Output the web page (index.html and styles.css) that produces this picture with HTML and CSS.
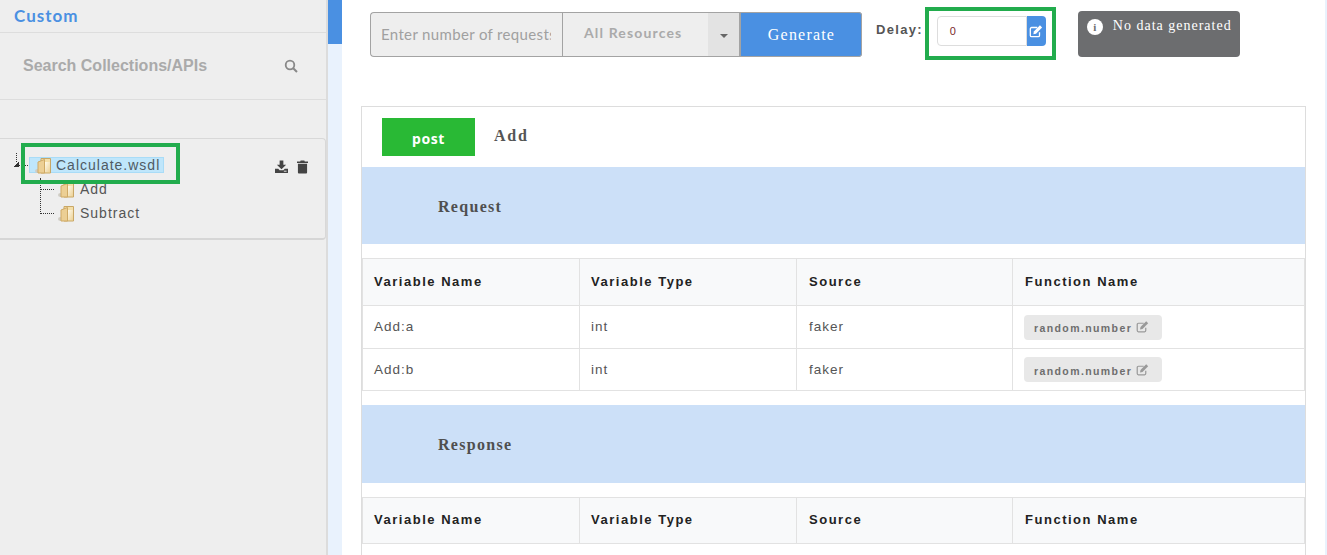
FILE: index.html
```html
<!DOCTYPE html>
<html lang="en">
<head>
<meta charset="utf-8">
<title>API data generator</title>
<link rel="stylesheet" href="styles.css">
</head>
<body>
<svg class="defs" width="0" height="0" aria-hidden="true">
  <defs>
    <linearGradient id="fold" x1="0" y1="0" x2="1" y2="1">
      <stop offset="0" stop-color="#fffaea"/><stop offset="1" stop-color="#ecd196"/>
    </linearGradient>
    <symbol id="folder" viewBox="0 0 17 17">
      <ellipse cx="2.500" cy="14" rx="2.500" ry="2" fill="#cfccc4"/>
      <path d="M6 1.500H15.500V16H6z" fill="#f4dfa8" stroke="#c9a765"/>
      <path d="M3 5 9.500 2.500V16H3z" fill="#eccf94" stroke="#cfa964"/>
      <path d="M10 5h5v10h-5z" fill="url(#fold)"/>
    </symbol>
    <symbol id="edit" viewBox="0 0 16 16">
      <path d="M12 9.500V13a1.500 1.500 0 0 1-1.500 1.500H3A1.500 1.500 0 0 1 1.500 13V5.500A1.500 1.500 0 0 1 3 4h6.500" fill="none" stroke="currentColor" stroke-width="1.500"/>
      <path d="M5.500 8.500 12.500 1.500l2.500 2.500-7 7-3 .6z" fill="currentColor"/>
    </symbol>
  </defs>
</svg>
<div class="app">
  <aside class="sidebar">
    <h2 class="brand">Custom</h2>
    <div class="search">
      <span>Search Collections/APIs</span>
      <svg class="search-icon" viewBox="0 0 14 14"><circle cx="6" cy="6" r="4.300" fill="none" stroke="currentColor" stroke-width="1.800"/><path d="M9.200 9.200 13 13" stroke="currentColor" stroke-width="2"/></svg>
    </div>
    <div class="tree-card">
      <div class="tree">
        <div class="tree-root">
          <span class="twist"></span>
          <span class="node-selected"><svg class="folder"><use href="#folder"/></svg>Calculate.wsdl</span>
        </div>
        <div class="tree-child"><span class="branch branch-first"></span><svg class="folder"><use href="#folder"/></svg>Add</div>
        <div class="tree-child"><span class="branch"></span><svg class="folder"><use href="#folder"/></svg>Subtract</div>
      </div>
      <div class="tree-actions">
        <svg class="tree-icon" viewBox="0 0 14 14"><path d="M5 0h4v4.500h3L7 9.500 2 4.500h3zM0 9h3.500L5 10.500h4L10.500 9H14v4.500H0z" fill="currentColor"/><rect x="9.500" y="11" width="3" height="1" fill="#eee"/></svg>
        <svg class="tree-icon tree-icon-trash" viewBox="0 0 12 14"><path d="M4 0h4l.5 1H12v1.500H0V1h3.500zM1 3.500h10V13a1 1 0 0 1-1 1H2a1 1 0 0 1-1-1z" fill="currentColor"/></svg>
      </div>
      <span class="highlight highlight-tree"></span>
    </div>
  </aside>
  <div class="rail"><div class="rail-tab"></div></div>
  <main class="main">
    <div class="toolbar">
      <div class="gen-group">
        <input class="count" type="text" placeholder="Enter number of requests" aria-label="Number of requests">
        <div class="resource"><span class="resource-label">All Resources</span><span class="caret-box"><span class="caret"></span></span></div>
        <button class="generate" type="button">Generate</button>
      </div>
      <label class="delay-label">Delay:</label>
      <div class="delay">
        <span class="delay-input">0</span>
        <span class="delay-btn"><svg class="edit-icon"><use href="#edit"/></svg></span>
        <span class="highlight highlight-delay"></span>
      </div>
      <div class="notice">
        <span class="info">i</span><span class="notice-text">No data generated</span>
      </div>
    </div>
    <section class="panel">
      <div class="op">
        <span class="method">post</span>
        <span class="op-name">Add</span>
      </div>
      <h3 class="band">Request</h3>
      <table class="vars">
        <thead><tr><th>Variable Name</th><th>Variable Type</th><th>Source</th><th>Function Name</th></tr></thead>
        <tbody>
          <tr><td>Add:a</td><td>int</td><td>faker</td><td><span class="fn">random.number<svg class="fn-icon"><use href="#edit"/></svg></span></td></tr>
          <tr><td>Add:b</td><td>int</td><td>faker</td><td><span class="fn">random.number<svg class="fn-icon"><use href="#edit"/></svg></span></td></tr>
        </tbody>
      </table>
      <h3 class="band band-response">Response</h3>
      <table class="vars vars-tail">
        <thead><tr><th>Variable Name</th><th>Variable Type</th><th>Source</th><th>Function Name</th></tr></thead>
      </table>
    </section>
  </main>
  <div class="rail rail-end"></div>
</div>
</body>
</html>
```
FILE: styles.css
```css
* { box-sizing: border-box; }
html, body { margin: 0; height: 100%; overflow: hidden; background: #fff; }
.defs { position: absolute; }
.app { display: flex; height: 555px; font-family: "Liberation Sans", Arial, sans-serif; color: #555; }

.sidebar { width: 328px; flex: none; background: #eee; border-right: 2px solid #dcdcdc; }
.brand { margin: 0; height: 33px; padding: 6px 0 0 14px; font: 700 17px/19px Lato, sans-serif; letter-spacing: 1px; color: #4a90e2; border-bottom: 1px solid #ddd; }
.search { height: 67px; padding: 0 28px 0 23px; display: flex; align-items: center; justify-content: space-between; border-bottom: 1px solid #ddd; font-weight: 700; font-size: 16px; color: #aaa; }
.search-icon { width: 14px; height: 14px; color: #888; }

.tree-card { position: relative; margin-top: 38px; height: 102px; width: 326px; padding: 14px 17px 0 12px; display: flex; justify-content: space-between; background: #eee; border: 1px solid #d8d8d8; border-left: 0; border-bottom: 2px solid #d6d6d6; border-radius: 0 4px 4px 0; }
.tree { font-size: 14px; letter-spacing: 1px; color: #555; line-height: 24px; }
.tree-root { display: flex; align-items: center; height: 24px; }
.twist { width: 17px; height: 24px; flex: none; background:
  linear-gradient(135deg, transparent 50%, #333 50%) 1px 9px / 6px 5px no-repeat,
  repeating-linear-gradient(90deg, #333 0 1px, transparent 1px 2px) 7px 12px / 10px 1px no-repeat,
  repeating-linear-gradient(#333 0 1px, transparent 1px 2px) 4px 0 / 1px 9px no-repeat; }
.node-selected { display: inline-flex; align-items: center; height: 16px; padding: 0 3px 0 5px; background: #bfe6fb; border: 1px solid #a9dcf7; color: #4f5a63; }
.folder { width: 17px; height: 17px; margin-right: 4px; flex: none; }
.tree-child { position: relative; display: flex; align-items: center; height: 24px; padding-left: 46px; }
.tree-child .folder { margin-right: 5px; }
.branch { position: absolute; left: 28px; top: -12px; width: 14px; height: 25px; border-left: 1px dotted #333; border-bottom: 1px dotted #333; }
.branch-first { top: 1px; height: 12px; }
.tree-actions { display: flex; gap: 9px; padding-top: 7px; color: #444; }
.tree-icon { width: 13px; height: 14px; }
.tree-icon-trash { width: 11px; }
.highlight { position: absolute; border: 4px solid #22ac4d; pointer-events: none; }
.highlight-tree { left: 21px; top: 4px; width: 159px; height: 41px; }
.highlight-delay { left: -12px; top: -9px; width: 131px; height: 53px; }

.rail { width: 14px; flex: none; background: #e9f2fd; }
.rail-tab { height: 44px; background: #4a90e2; }
.rail-end { width: 2px; }
.main { flex: 1; min-width: 0; background: #fff; padding: 0 19px; }

.toolbar { position: relative; display: flex; height: 106px; padding: 11px 0 0 9px; align-items: flex-start; }
.gen-group { display: flex; width: 492px; height: 46px; margin-top: 1px; flex: none; }
.count { width: 192px; height: 45px; padding: 0 11px 2px 10px; background: #eee; border: 1px solid #a3a3a3; border-right: 0; border-radius: 4px 0 0 4px; font: 400 15px Lato, sans-serif; letter-spacing: .35px; outline: none; }
.count::placeholder { color: #a0a0a0; opacity: 1; }
.resource { width: 179px; height: 45px; display: flex; border: 2px solid #a3a3a3; border-width: 1px 2px; border-left-width: 1px; background: #eee; color: #aaa; }
.resource-label { flex: 1; padding: 11px 0 0 21px; font: 700 14px/17px Lato, sans-serif; letter-spacing: 1.150px; }
.caret-box { width: 31px; display: flex; align-items: center; justify-content: center; background: #e3e3e3; }
.caret { width: 0; height: 0; margin-top: 2px; border: 4px solid transparent; border-top-color: #666; border-bottom: 0; }
.generate { width: 121px; height: 45px; padding: 0; border: 0; border-radius: 0 4px 4px 0; background: #4a90e2; color: #fff; font: 400 16px "Liberation Serif", serif; letter-spacing: 1.200px; box-shadow: inset 0 -1px 0 #a3a3a3, inset -1px 0 0 #a3a3a3, inset 0 1px 0 #a3a3a3; }
.delay-label { margin: 11px 0 0 14px; font: 700 13px/16px "Liberation Sans", sans-serif; letter-spacing: 1.300px; color: #555; }
.delay { position: relative; display: flex; margin: 5px 0 0 14px; height: 30px; flex: none; }
.delay-input { width: 90px; height: 30px; padding: 7px 12px; background: #fff; border: 1px solid #ddd; border-radius: 4px 0 0 4px; font-size: 11px; line-height: 14px; color: #7a2a2a; }
.delay-btn { width: 19px; height: 30px; display: flex; align-items: center; justify-content: center; background: #4a90e2; border-radius: 0 4px 4px 0; color: #fff; }
.edit-icon { width: 14px; height: 14px; }
.notice { display: flex; align-items: flex-start; gap: 10px; width: 162px; height: 46px; margin-left: 32px; padding: 6px 0 0 9px; flex: none; background: #6c6d6f; border-radius: 4px; font: 400 14px/17px "Liberation Serif", serif; letter-spacing: 1px; color: #fff; }
.notice-text { white-space: nowrap; }
.info { width: 16px; height: 16px; margin-top: 2px; flex: none; border-radius: 50%; background: #fff; color: #6c6d6f; font: 700 11px/16px "Liberation Serif", serif; text-align: center; letter-spacing: 0; }

.panel { width: 945px; height: 460px; border: 1px solid #ddd; border-bottom: 0; }
.op { display: flex; height: 60px; padding: 11px 0 0 20px; align-items: flex-start; }
.method { width: 93px; height: 38px; background: #29b935; color: #fff; font: 700 14px/41px "Noto Sans", sans-serif; letter-spacing: .6px; text-align: center; }
.op-name { margin-left: 19px; font: 700 16px/35px "Liberation Serif", serif; letter-spacing: 1.800px; color: #555; }
.band { margin: 0; height: 77px; padding: 31px 0 0 76px; background: #cce0f8; font: 700 16px/18px "Liberation Serif", serif; letter-spacing: 1.300px; color: #4f4f4f; }
.band-response { height: 78px; margin-top: 14px; padding-top: 31px; }
.vars { width: 943px; margin-top: 14px; table-layout: fixed; border-collapse: collapse; font-size: 13.500px; letter-spacing: 1px; border: 1px solid #ddd; }
.vars th:nth-child(1), .vars td:nth-child(1) { width: 217px; }
.vars th:nth-child(2), .vars td:nth-child(2) { width: 217px; }
.vars th:nth-child(3), .vars td:nth-child(3) { width: 216px; }
.vars th, .vars td { border: 1px solid #e2e2e2; padding: 0 11px; text-align: left; }
.vars th:nth-child(n+3), .vars td:nth-child(n+3) { padding-left: 12px; }
.vars th { height: 47px; padding-bottom: 2px; background: #f8f9fa; color: #222; font-size: 13px; font-weight: 700; letter-spacing: 1.520px; }
.vars-tail th { height: 46px; padding-bottom: 3px; }
.vars td { height: 43px; padding-bottom: 2px; color: #555; }
.vars tr:last-child td { height: 42px; padding-bottom: 0; }
.vars td:last-child { padding-left: 11px; padding-bottom: 0; }
.fn { display: inline-flex; align-items: center; width: 138px; height: 25px; padding: 1px 0 0 10px; background: #e8e8e8; border-radius: 4px; font-size: 10.500px; font-weight: 700; letter-spacing: 1.400px; color: #6e6e6e; }
.vars tr:last-child .fn { padding-top: 2px; }
.fn-icon { width: 13px; height: 13px; margin: -3px 0 0 4px; color: #999; }
```
